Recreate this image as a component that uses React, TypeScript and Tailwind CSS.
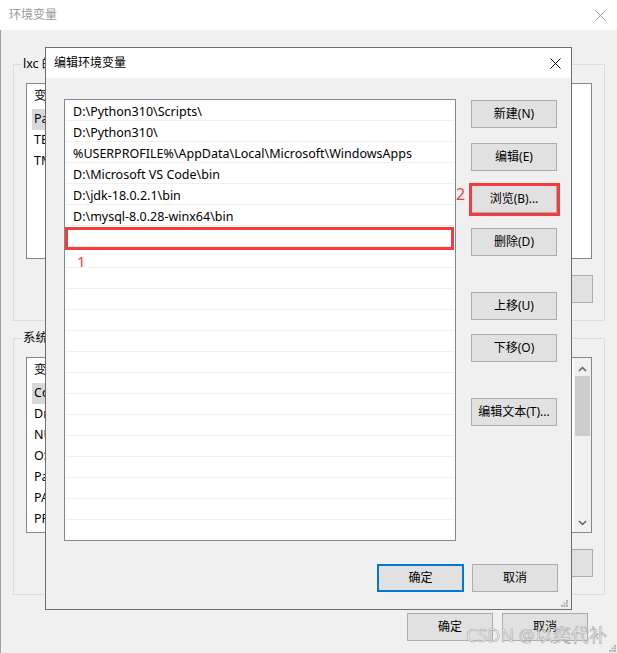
import React from 'react'

const paths = [
  'D:\\Python310\\Scripts\\',
  'D:\\Python310\\',
  '%USERPROFILE%\\AppData\\Local\\Microsoft\\WindowsApps',
  'D:\\Microsoft VS Code\\bin',
  'D:\\jdk-18.0.2.1\\bin',
  'D:\\mysql-8.0.28-winx64\\bin',
]

const userVars = ['Path', 'TEMP', 'TMP']
const sysVars = [
  'ComSpec',
  'DriverData',
  'NUMBER_OF_PROCESSORS',
  'OS',
  'Path',
  'PATHEXT',
  'PROCESSOR_ARCHITECTURE',
]

function CloseIcon({ color }: { color: string }) {
  return (
    <svg width="11" height="11" viewBox="0 0 11 11" className="shrink-0">
      <path d="M0.5 0.5 L10.5 10.5 M10.5 0.5 L0.5 10.5" stroke={color} strokeWidth="1" fill="none" />
    </svg>
  )
}

function Grip() {
  return (
    <svg width="7" height="7" viewBox="0 0 7 7">
      <g fill="#b4b4b4">
        <rect x="5" y="0" width="2" height="2" />
        <rect x="2.5" y="2.5" width="2" height="2" />
        <rect x="5" y="2.5" width="2" height="2" />
        <rect x="0" y="5" width="2" height="2" />
        <rect x="2.5" y="5" width="2" height="2" />
        <rect x="5" y="5" width="2" height="2" />
      </g>
    </svg>
  )
}

function WinButton({
  label,
  focused = false,
  className = '',
}: {
  label: string
  focused?: boolean
  className?: string
}) {
  return (
    <div
      className={`flex h-[28px] w-[86px] shrink-0 items-center justify-center bg-[#e1e1e1] text-[12px] text-black ${
        focused ? 'border-2 border-[#0078d7]' : 'border border-[#adadad]'
      } ${className}`}
    >
      {label}
    </div>
  )
}

function VarList({ rows, scroll = false }: { rows: string[]; scroll?: boolean }) {
  return (
    <div className="flex h-[176px] w-[566px] border border-[#828790] bg-white">
      <div className="flex flex-1 flex-col">
        <div className="flex h-[25px] items-center pl-[7px] text-[12.5px] text-black">
          <span className="w-[150px]">变量</span>
          <span>值</span>
        </div>
        {rows.map((r, i) => (
          <div
            key={r}
            className={`ml-[5px] flex h-[21px] items-center pl-[2px] text-[12.5px] text-black ${
              i === 0 ? 'w-[150px] bg-[#d9d9d9]' : ''
            }`}
          >
            {r}
          </div>
        ))}
      </div>
      {scroll && (
        <div className="flex w-[17px] flex-col items-center bg-[#f0f0f0]">
          <svg width="9" height="6" viewBox="0 0 9 6" className="mt-[8px]">
            <path d="M1 5 L4.5 1.5 L8 5" stroke="#606060" strokeWidth="1.5" fill="none" />
          </svg>
          <div className="mt-[4px] h-[60px] w-[15px] bg-[#cdcdcd]" />
          <div className="flex-1" />
          <svg width="9" height="6" viewBox="0 0 9 6" className="mb-[6px]">
            <path d="M1 1 L4.5 4.5 L8 1" stroke="#606060" strokeWidth="1.5" fill="none" />
          </svg>
        </div>
      )}
    </div>
  )
}

function Group({
  label,
  rows,
  scroll,
  buttons,
  className = '',
}: {
  label: string
  rows: string[]
  scroll?: boolean
  buttons: string[]
  className?: string
}) {
  return (
    <div className={`relative flex h-[257px] w-[592px] flex-col border border-[#dcdcdc] pl-[12px] pr-[11px] pt-[18px] ${className}`}>
      <span className="absolute left-[8px] top-[-9px] bg-[#f0f0f0] px-[1px] text-[12.5px] leading-[16px] text-black">
        {label}
      </span>
      <VarList rows={rows} scroll={scroll} />
      <div className="mt-[16px] flex justify-end gap-[9px]">
        {buttons.map((b) => (
          <WinButton key={b} label={b} />
        ))}
      </div>
    </div>
  )
}

function EditDialog() {
  const rows = Array.from({ length: 21 }, (_, i) => paths[i] ?? '')
  return (
    <div className="absolute left-[45px] top-[47px] flex h-[563px] w-[527px] flex-col border border-[#6e6e6e] bg-[#f0f0f0]">
      <div className="flex h-[30px] items-center justify-between bg-white pl-[8px] pr-[10px] text-[12px] text-black">
        <span>编辑环境变量</span>
        <CloseIcon color="#000" />
      </div>
      <div className="relative flex pl-[18px] pt-[21px]">
        <div className="h-[442px] w-[392px] overflow-hidden border border-[#828790] bg-white">
          {rows.map((p, i) => (
            <div
              key={i}
              className="mx-[1px] flex h-[21px] items-center border-b border-[#f0f0f0] pl-[7px] pt-[4px] text-[12.5px] text-black"
            >
              {p}
            </div>
          ))}
        </div>
        <div className="ml-[15px] flex flex-col pt-[1px]">
          <WinButton label="新建(N)" />
          <WinButton label="编辑(E)" className="mt-[15px]" />
          <WinButton label="浏览(B)..." className="mt-[14px]" />
          <WinButton label="删除(D)" className="mt-[15px]" />
          <WinButton label="上移(U)" className="mt-[36px]" />
          <WinButton label="下移(O)" className="mt-[14px]" />
          <WinButton label="编辑文本(T)..." className="mt-[36px]" />
        </div>

        {/* annotations */}
        <div className="absolute left-[19px] top-[149px] h-[23px] w-[389px] border-[3px] border-[#f53c3c]" />
        <span className="absolute left-[31px] top-[174px] text-[15px] leading-[18px] text-[#f53c3c]">1</span>
        <div className="absolute left-[423px] top-[105px] h-[33px] w-[91px] border-[3px] border-[#f53c3c]" />
        <span className="absolute left-[410px] top-[106px] text-[16px] leading-[20px] text-[#f53c3c]">2</span>
      </div>
      <div className="mt-[23px] flex justify-end gap-[8px] pr-[13px]">
        <WinButton label="确定" focused className="w-[87px]" />
        <WinButton label="取消" />
      </div>
      <div className="absolute bottom-[2px] right-[3px]">
        <Grip />
      </div>
    </div>
  )
}

export default function App() {
  return (
    <div className="relative h-[653px] w-[617px] overflow-hidden bg-[#f0f0f0] font-['Noto_Sans','Noto_Sans_CJK_SC',sans-serif]">
      <div className="flex h-[30px] items-center justify-between bg-white pl-[9px] pr-[11px] text-[12px] text-[#999]">
        <span>环境变量</span>
        <CloseIcon color="#999" />
      </div>
      <div className="flex h-[623px] flex-col border-l border-[#a0a0a0] pl-[12px]">
        <Group
          label="lxc 的用户变量(U)"
          rows={userVars}
          buttons={['新建(N)...', '编辑(E)...', '删除(D)']}
          className="mt-[34px]"
        />
        <Group
          label="系统变量(S)"
          rows={sysVars}
          scroll
          buttons={['新建(W)...', '编辑(I)...', '删除(L)']}
          className="mt-[17px]"
        />
        <div className="mt-[18px] flex justify-end gap-[9px] pr-[29px]">
          <WinButton label="确定" />
          <WinButton label="取消" />
        </div>
      </div>
      <div className="absolute bottom-[1px] right-[1px]">
        <Grip />
      </div>

      <EditDialog />

      <span className="absolute left-[466px] top-[624px] text-[18px] leading-[22px] text-[#f6f6f6] [-webkit-text-stroke:0.6px_#a8a8a8]">
        CSDN @以奕代补
      </span>
    </div>
  )
}
